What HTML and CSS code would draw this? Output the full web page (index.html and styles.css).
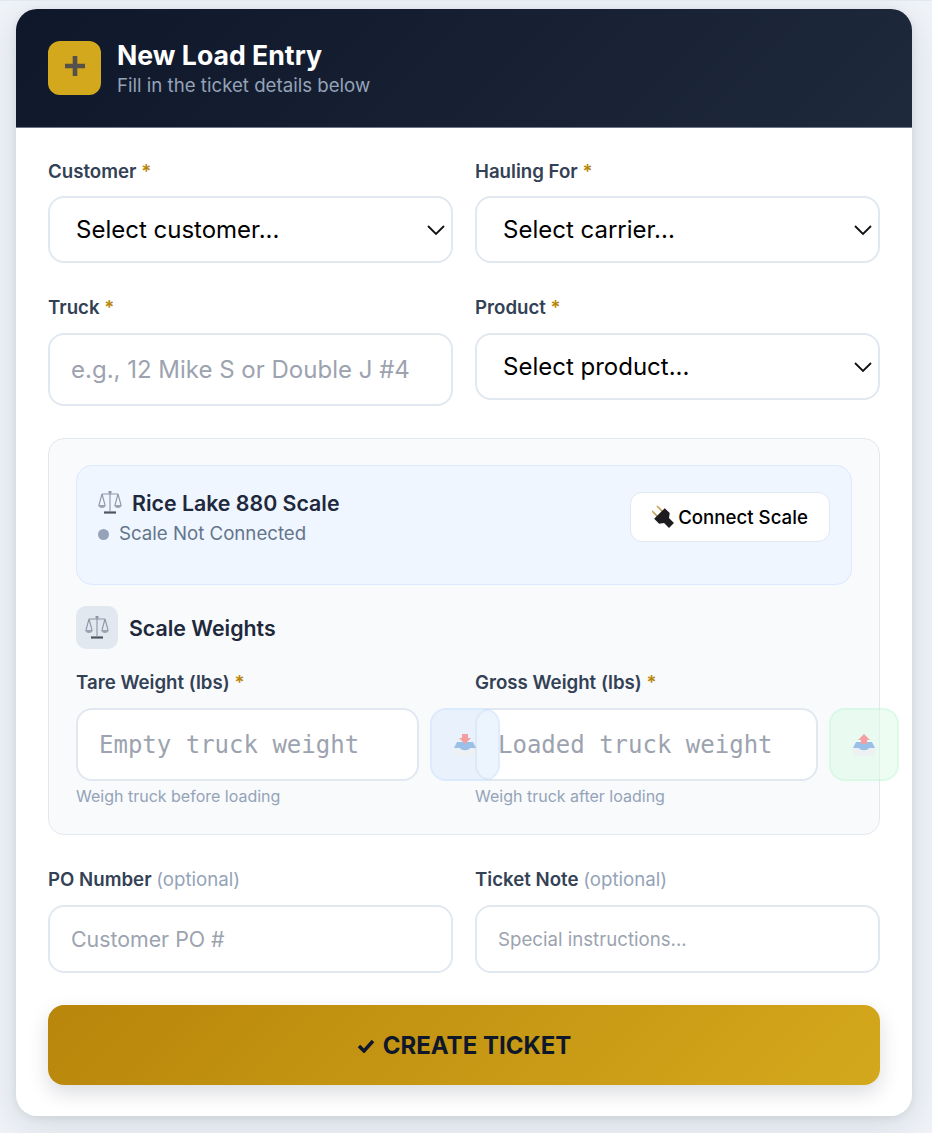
FILE: index.html
```html
<!DOCTYPE html>
<html lang="en">
<head>
<meta charset="utf-8">
<title>New Load Entry</title>
<link rel="stylesheet" href="styles.css">
</head>
<body>
<main class="card">
  <header class="card-head">
    <div class="head-icon">
      <svg class="plus" width="22" height="22" viewBox="0 0 22 22"><path d="M11 1v20M1 11h20" fill="none" stroke="#55514a" stroke-width="4.6"/></svg>
    </div>
    <div class="head-text">
      <h1>New Load Entry</h1>
      <p>Fill in the ticket details below</p>
    </div>
  </header>
  <form class="form">
    <div class="row row-first">
      <div class="field">
        <label>Customer <span class="req">*</span></label>
        <select class="control pick"><option>Select customer...</option></select>
      </div>
      <div class="field">
        <label>Hauling For <span class="req">*</span></label>
        <select class="control pick"><option>Select carrier...</option></select>
      </div>
    </div>
    <div class="row row-second">
      <div class="field">
        <label>Truck <span class="req">*</span></label>
        <input class="control tall" placeholder="e.g., 12 Mike S or Double J #4">
      </div>
      <div class="field">
        <label>Product <span class="req">*</span></label>
        <select class="control pick"><option>Select product...</option></select>
      </div>
    </div>
    <section class="scale-panel">
      <div class="scale-status">
        <div class="scale-info">
          <div class="scale-name">
            <svg class="scale-glyph" width="24" height="26" viewBox="0 0 24 26"><g fill="none" stroke="#8b96a5" stroke-width="1.1"><path d="M12 2v19M4 4h16M4 4 1 15M4 4l3 11M20 4l-3 11M20 4l3 11"/></g><path d="M0 15h8q-1 3-4 3t-4-3zM16 15h8q-1 3-4 3t-4-3z" fill="#9aa4b1"/><path d="M6 22.500h12" stroke="#4b5563" stroke-width="2.200"/><rect x="10.500" y="1" width="3" height="2.500" fill="#8d98a6"/></svg>
            <span>Rice Lake 880 Scale</span>
          </div>
          <div class="scale-state"><span class="dot"></span>Scale Not Connected</div>
        </div>
        <button type="button" class="connect">
          <svg width="22" height="24" viewBox="0 0 22 24"><g transform="rotate(-45 11 12)"><path d="M7.500 0v8M14.500 0v8" stroke="#c6a052" stroke-width="1.600" fill="none"/><path d="M3.500 7h15v7l-4 3v7h-7v-7l-4-3z" fill="#1d1d20"/></g></svg>
          <span>Connect Scale</span>
        </button>
      </div>
      <div class="weights-title">
        <span class="weights-icon">
          <svg width="24" height="26" viewBox="0 0 24 26"><g fill="none" stroke="#8b96a5" stroke-width="1.1"><path d="M12 2v19M4 4h16M4 4 1 15M4 4l3 11M20 4l-3 11M20 4l3 11"/></g><path d="M0 15h8q-1 3-4 3t-4-3zM16 15h8q-1 3-4 3t-4-3z" fill="#9aa4b1"/><path d="M6 22.500h12" stroke="#4b5563" stroke-width="2.200"/><rect x="10.500" y="1" width="3" height="2.500" fill="#8d98a6"/></svg>
        </span>
        <span>Scale Weights</span>
      </div>
      <div class="row weights">
        <div class="field">
          <label>Tare Weight (lbs) <span class="req">*</span></label>
          <div class="weight-line">
            <input class="control weight" placeholder="Empty truck weight">
            <button type="button" class="capture blue">
              <svg width="22" height="22" viewBox="0 0 22 22"><path d="M0 12h22v9a1 1 0 0 1-1 1H1a1 1 0 0 1-1-1z" fill="#e6e9ee"/><path d="M3 8h16l3 6h-6c-1 3-9 3-10 0H0z" fill="#3f87d6"/><path d="M8 0h6v4h3l-6 6-6-6h3z" fill="#ef4444"/></svg>
            </button>
          </div>
          <small>Weigh truck before loading</small>
        </div>
        <div class="field">
          <label>Gross Weight (lbs) <span class="req">*</span></label>
          <div class="weight-line">
            <input class="control weight" placeholder="Loaded truck weight">
            <button type="button" class="capture green">
              <svg width="22" height="22" viewBox="0 0 22 22"><path d="M0 12h22v9a1 1 0 0 1-1 1H1a1 1 0 0 1-1-1z" fill="#e6e9ee"/><path d="M3 8h16l3 6h-6c-1 3-9 3-10 0H0z" fill="#3f87d6"/><path d="M11 0l6 6h-3v4H8V6H5z" fill="#ef4444"/></svg>
            </button>
          </div>
          <small>Weigh truck after loading</small>
        </div>
      </div>
    </section>
    <div class="row row-po">
      <div class="field">
        <label>PO Number <span class="opt">(optional)</span></label>
        <input class="control po" placeholder="Customer PO #">
      </div>
      <div class="field">
        <label>Ticket Note <span class="opt">(optional)</span></label>
        <input class="control note" placeholder="Special instructions...">
      </div>
    </div>
    <button type="button" class="create">
      <svg width="18" height="15" viewBox="0 0 18 15"><path d="M2 8l5 5L16 3" fill="none" stroke="#0f172a" stroke-width="3.500"/></svg>
      <span>CREATE TICKET</span>
    </button>
  </form>
</main>
</body>
</html>
```
FILE: styles.css
```css
* { box-sizing: border-box; }
html, body { height: 100%; }
body {
  margin: 0;
  padding: 9px 20px 0 16px;
  background: #f0f4f9;
  border-top: 1px solid #e2e8f0;
  font-family: Inter, "Noto Sans", sans-serif;
  overflow: hidden;
}
.card {
  background: #fff;
  border-radius: 21px;
  margin-top: -1px;
  height: 1107px;
  overflow: hidden;
  box-shadow: 0 10px 40px rgba(15, 23, 42, 0.12), 0 2px 8px rgba(15, 23, 42, 0.08);
}
.card-head {
  height: 119px;
  padding: 0 32px;
  display: flex;
  align-items: center;
  gap: 16px;
  background: linear-gradient(135deg, #0f172a, #1e293b);
  border-bottom: 1px solid #6e7786;
}
.head-icon {
  width: 53px;
  height: 54px;
  flex: none;
  border-radius: 12px;
  background: #d4a81c;
  display: flex;
  align-items: center;
  justify-content: center;
}
.plus { margin-bottom: 4px; }
.head-text { padding-top: 2px; }
.head-text h1 {
  margin: 0;
  color: #fff;
  font-size: 26.67px;
  line-height: 32px;
  font-weight: 700;
}
.head-text p {
  margin: 1px 0 0;
  color: #94a3b8;
  font-size: 18.67px;
  line-height: 28px;
}
.form {
  padding: 32px 32px 32px;
}
.row {
  display: grid;
  grid-template-columns: 405px 405px;
  gap: 22px;
}
.row-first label { margin-bottom: 12px; }
.row-second { margin-top: 33px; }
.field { min-width: 0; }
label {
  display: block;
  color: #334155;
  font-size: 18.67px;
  line-height: 24px;
  font-weight: 600;
  margin-bottom: 13px;
}
.req { color: #b8860b; }
.opt { color: #94a3b8; font-weight: 400; }
.control {
  display: block;
  width: 100%;
  height: 68px;
  padding: 0 21px;
  border: 2px solid #e2e8f0;
  border-radius: 16px;
  background: #fff;
  font-family: Inter, sans-serif;
  font-size: 24px;
  color: #000;
}
.pick {
  appearance: none;
  height: 67px;
  padding-left: 26px;
  background-image: url("data:image/svg+xml,%3Csvg xmlns='http://www.w3.org/2000/svg' width='18' height='12' viewBox='0 0 18 12'%3E%3Cpath d='M1 2l8 8 8-8' fill='none' stroke='%23111' stroke-width='1.800'/%3E%3C/svg%3E");
  background-repeat: no-repeat;
  background-position: right 6px center;
}
.control.tall { height: 73px; }
.control.po { font-size: 21.33px; }
.control.note { font-size: 18.67px; }
.control::placeholder { color: #9ca3af; opacity: 1; }
.scale-panel {
  margin-top: 32px;
  height: 397px;
  padding: 26px 27px;
  background: #f8fafc;
  border: 1px solid #e2e8f0;
  border-radius: 16px;
}
.scale-status {
  height: 120px;
  padding: 26px 21px 0 21px;
  background: #eff6ff;
  border: 1px solid #dbeafe;
  border-radius: 16px;
  display: flex;
  justify-content: space-between;
  align-items: flex-start;
}
.scale-info { margin-top: -2px; }
.scale-name {
  display: flex;
  align-items: center;
  gap: 10px;
  color: #1e293b;
  font-size: 21.33px;
  font-weight: 600;
  line-height: 26px;
}
.scale-state {
  display: flex;
  align-items: center;
  gap: 10px;
  margin-top: 3px;
  color: #64748b;
  font-size: 18.67px;
  line-height: 30px;
}
.dot {
  width: 11px;
  height: 11px;
  border-radius: 50%;
  background: #94a3b8;
}
.connect {
  width: 200px;
  height: 50px;
  background: #fff;
  border: 1px solid #e2e8f0;
  border-radius: 12px;
  font-family: Inter, sans-serif;
  font-size: 18.67px;
  font-weight: 500;
  color: #000;
  display: flex;
  align-items: center;
  justify-content: center;
  gap: 4px;
}
.weights-title {
  display: flex;
  align-items: center;
  gap: 11px;
  margin-top: 21px;
  color: #1e293b;
  font-size: 21.33px;
  font-weight: 600;
}
.weights-icon {
  width: 42px;
  height: 43px;
  border-radius: 10px;
  background: #e2e8f0;
  display: flex;
  align-items: center;
  justify-content: center;
}
.weights { margin-top: 22px; grid-template-columns: 377px 377px; }
.weights label { margin-bottom: 13px; }
.weight-line { display: flex; gap: 11px; }
.control.weight {
  flex: none;
  width: 343px;
  height: 73px;
  font-family: "DejaVu Sans Mono", monospace;
  font-size: 24px;
}
.capture {
  flex: none;
  width: 70px;
  height: 73px;
  padding: 0;
  border-radius: 16px;
  opacity: 0.5;
  display: flex;
  align-items: center;
  justify-content: center;
}
.capture.blue { background: #dbeafe; border: 2px solid #bfdbfe; }
.capture.green { background: #dcfce7; border: 2px solid #bbf7d0; }
small {
  display: block;
  margin-top: 5px;
  color: #94a3b8;
  font-size: 16px;
  line-height: 20px;
}
.row-po { margin-top: 33px; }
.create {
  display: flex;
  align-items: center;
  justify-content: center;
  gap: 8px;
  width: 100%;
  height: 80px;
  margin-top: 32px;
  border: 0;
  border-radius: 16px;
  background: linear-gradient(135deg, #b8860b, #d4a81c);
  color: #0f172a;
  font-family: Inter, sans-serif;
  font-size: 24px;
  font-weight: 700;
  box-shadow: 0 8px 20px rgba(15, 23, 42, 0.15);
}
```
